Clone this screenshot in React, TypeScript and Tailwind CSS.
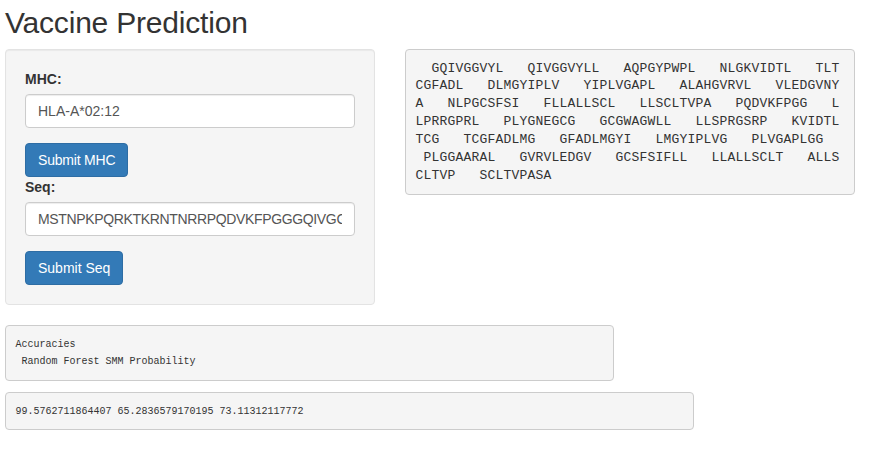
import React from "react";

const seqLines = [
  "  GQIVGGVYL   QIVGGVYLL   AQPGYPWPL   NLGKVIDTL   TLT",
  "CGFADL   DLMGYIPLV   YIPLVGAPL   ALAHGVRVL   VLEDGVNY",
  "A   NLPGCSFSI   FLLALLSCL   LLSCLTVPA   PQDVKFPGG   L",
  "LPRRGPRL   PLYGNEGCG   GCGWAGWLL   LLSPRGSRP   KVIDTL",
  "TCG   TCGFADLMG   GFADLMGYI   LMGYIPLVG   PLVGAPLGG  ",
  " PLGGAARAL   GVRVLEDGV   GCSFSIFLL   LLALLSCLT   ALLS",
  "CLTVP   SCLTVPASA",
];

export default function App() {
  return (
    <div className="min-h-[464px] bg-white pl-[5px] pt-[6px] font-['Liberation_Sans',Arial,sans-serif] text-[#333]">
      <h2 className="text-[30px] leading-[33px] font-normal tracking-[-0.2px] mb-[10px]">Vaccine Prediction</h2>
      <div className="flex items-start gap-[30px]">
        <div className="w-[370px] bg-[#f5f5f5] border border-[#e3e3e3] rounded-[4px] p-[19px] shadow-[inset_0_1px_1px_rgba(0,0,0,0.05)]">
          <label className="block text-[14px] leading-[20px] font-bold mb-[5px]">MHC:</label>
          <input
            readOnly
            value="HLA-A*02:12"
            className="block w-full h-[34px] px-[12px] py-[6px] text-[14px] leading-[20px] text-[#555] bg-white border border-[#ccc] rounded-[4px] shadow-[inset_0_1px_1px_rgba(0,0,0,0.075)] outline-none"
          />
          <div className="mt-[15px]">
            <button className="h-[34px] px-[12px] text-[14px] leading-[20px] tracking-[-0.2px] text-white bg-[#337ab7] border border-[#2e6da4] rounded-[4px]">
              Submit MHC
            </button>
          </div>
          <label className="block text-[14px] leading-[20px] font-bold mb-[5px]">Seq:</label>
          <input
            readOnly
            value="MSTNPKPQRKTKRNTNRRPQDVKFPGGGQIVGGVYLLPRRGPRLGVRATRKTSERSQPRGRRQPIPKARRPEGRTWAQPGYPWPLYGNEGCGWAGWLLSPRGSRPSWGPTDPRRRSRNLGKVIDTLTCGFADLMGYIPLVGAPLGGAARALAHGVRVLEDGVNYATGNLPGCSFSIFLLALLSCLTVPASA"
            className="block w-full h-[34px] px-[12px] py-[6px] text-[14px] leading-[20px] tracking-[-0.35px] text-[#555] bg-white border border-[#ccc] rounded-[4px] shadow-[inset_0_1px_1px_rgba(0,0,0,0.075)] outline-none"
          />
          <div className="mt-[15px]">
            <button className="h-[34px] px-[12px] text-[14px] leading-[20px] text-white bg-[#337ab7] border border-[#2e6da4] rounded-[4px]">
              Submit Seq
            </button>
          </div>
        </div>
        <pre className="w-[450px] bg-[#f5f5f5] border border-[#ccc] rounded-[4px] p-[9.5px] font-['Liberation_Mono','Courier_New',monospace] text-[13px] leading-[17.9px] tracking-[0.2px] text-[#333] whitespace-pre">
          {seqLines.join("\n")}
        </pre>
      </div>
      <pre className="mt-[20px] w-[609px] bg-[#f5f5f5] border border-[#ccc] rounded-[4px] p-[9.5px] font-['Liberation_Mono','Courier_New',monospace] text-[10px] leading-[17.5px] text-[#333] whitespace-pre">
        {"Accuracies\n Random Forest SMM Probability"}
      </pre>
      <pre className="mt-[11px] w-[689px] bg-[#f5f5f5] border border-[#ccc] rounded-[4px] p-[9.5px] font-['Liberation_Mono','Courier_New',monospace] text-[10px] leading-[17px] text-[#333] whitespace-pre">
        {"99.5762711864407 65.2836579170195 73.11312117772"}
      </pre>
    </div>
  );
}
